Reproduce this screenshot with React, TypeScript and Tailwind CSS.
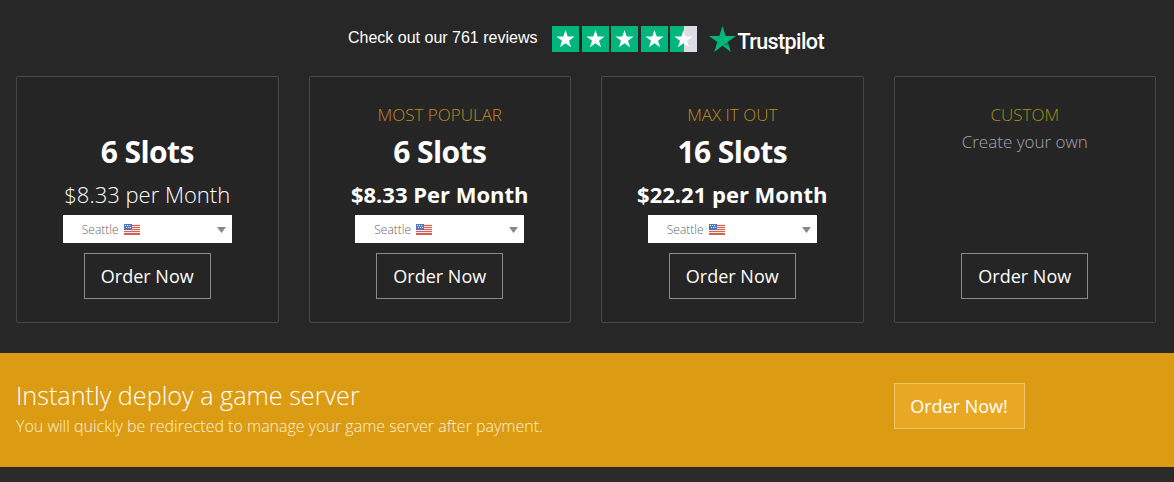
const PLANS = [
  { label: '', slots: '6 Slots', price: '$8.33 per Month', bold: false, color: '' },
  { label: 'MOST POPULAR', slots: '6 Slots', price: '$8.33 Per Month', bold: true, color: 'text-[#c08a24]' },
  { label: 'MAX IT OUT', slots: '16 Slots', price: '$22.21 per Month', bold: true, color: 'text-[#b88e22]' },
];

const STAR = '13.5,3.9 15.66,10.53 22.6,10.5 16.99,14.63 19.1,21.3 13.5,17.17 7.9,21.3 10.01,14.63 4.4,10.5 11.34,10.53';

function Flag() {
  return (
    <svg width="16" height="11" viewBox="0 0 16 11" className="inline-block">
      <rect width="16" height="11" fill="#f3e6e6" />
      <rect y="1" width="16" height="1" fill="#d9604f" />
      <rect y="3" width="16" height="1" fill="#d9604f" />
      <rect y="5" width="16" height="1" fill="#d9604f" />
      <rect y="7" width="16" height="1" fill="#d9604f" />
      <rect y="9" width="16" height="2" fill="#d9604f" />
      <rect width="8" height="6" fill="#4f74c0" />
      <rect x="1" y="1" width="1" height="1" fill="#fff" />
      <rect x="3" y="1" width="1" height="1" fill="#fff" />
      <rect x="5" y="1" width="1" height="1" fill="#fff" />
      <rect x="2" y="3" width="1" height="1" fill="#fff" />
      <rect x="4" y="3" width="1" height="1" fill="#fff" />
      <rect x="6" y="3" width="1" height="1" fill="#fff" />
    </svg>
  );
}

function LocationSelect() {
  return (
    <div className="w-[169px] h-[28px] bg-white flex items-center justify-between pl-[19px] pr-[6px] pt-[1px] text-[12px] font-light text-[#666]">
      <span className="flex items-center gap-[5px]">Seattle <Flag /></span>
      <svg width="9" height="6" viewBox="0 0 9 6"><polygon points="0,0 9,0 4.5,6" fill="#888" /></svg>
    </div>
  );
}

function OrderButton() {
  return (
    <button className="w-[127px] h-[46px] border border-[#8a8a8a] text-[18px] text-white">Order Now</button>
  );
}

function TrustStars() {
  return (
    <div className="flex gap-[2.5px] ml-[15px]">
      {[0, 1, 2, 3].map((i) => (
        <svg key={i} width="27" height="26" viewBox="0 0 27 26">
          <rect width="27" height="26" fill="#00b67a" />
          <polygon points={STAR} fill="#fff" />
        </svg>
      ))}
      <svg width="27" height="26" viewBox="0 0 27 26">
        <rect width="27" height="26" fill="#dcdce6" />
        <rect width="14" height="26" fill="#00b67a" />
        <polygon points={STAR} fill="#fff" />
      </svg>
    </div>
  );
}

function TrustLogo() {
  return (
    <div className="flex items-start ml-[12px]">
      <svg width="27" height="26" viewBox="0 0 27 26">
        <polygon points="13.5,0 16.7,9.9 27,9.9 18.7,16 21.8,26 13.5,19.8 5.2,26 8.3,16 0,9.9 10.3,9.9" fill="#00b67a" />
        <polygon points="18.7,16 19.6,19 13.5,19.8" fill="#00894f" />
      </svg>
      <span className="ml-[1px] mt-[3px] text-[21.5px] leading-[26px] font-medium tracking-[-0.6px] text-white font-['Roboto',sans-serif]">Trustpilot</span>
    </div>
  );
}

export default function App() {
  return (
    <div className="h-[482px] overflow-hidden bg-[#272727] font-['Open_Sans',sans-serif]">
      {/* Reviews */}
      <div className="h-[76px] pt-[26px] pr-[2px] flex justify-center items-start">
        <span className="text-[16px] leading-[24px] text-white font-['Liberation_Sans',sans-serif]">Check out our 761 reviews</span>
        <TrustStars />
        <TrustLogo />
      </div>

      {/* Plans */}
      <div className="grid grid-cols-4 gap-[30px] pl-4 pr-[18px]">
        {PLANS.map((p) => (
          <div key={p.price} className="h-[247px] bg-[#252525] border border-[#484848] rounded-[2px] flex flex-col items-center">
            <div className={`h-[24px] mt-[26px] text-[17px] leading-[24px] font-light ${p.color}`}>{p.label}</div>
            <h3 className="mt-[5px] h-[40px] text-[30px] leading-[40px] font-bold tracking-[-0.6px] text-white">{p.slots}</h3>
            <div className={`mt-[7px] h-[30px] leading-[30px] text-[22px] text-white ${p.bold ? 'font-bold' : 'font-light'}`}>{p.price}</div>
            <div className="mt-[6px]"><LocationSelect /></div>
            <div className="mt-[10px]"><OrderButton /></div>
          </div>
        ))}
        <div className="h-[247px] bg-[#252525] border border-[#484848] rounded-[2px] flex flex-col items-center">
          <div className="h-[24px] mt-[26px] text-[17px] leading-[24px] font-light text-[#a8901c]">CUSTOM</div>
          <div className="mt-[3px] text-[17px] leading-[24px] font-light text-[#a4a4b0]">Create your own</div>
          <div className="mt-auto mb-[23px]"><OrderButton /></div>
        </div>
      </div>

      {/* Banner */}
      <div className="mt-[30px] h-[114px] bg-[#db9b12] grid grid-cols-4 gap-[30px] pl-4 pr-[18px] pt-[27px] items-start">
        <div className="col-span-3">
          <div className="text-[25.2px] leading-[30px] font-light text-white">Instantly deploy a game server</div>
          <div className="text-[16px] leading-[24px] font-light text-[#fdf1d6] mt-[4px]">You will quickly be redirected to manage your game server after payment.</div>
        </div>
        <button className="mt-[3px] w-[131px] h-[46px] bg-[#e9a823] border border-[#f0c468] text-[18px] text-white">Order Now!</button>
      </div>
      <div className="h-[15px] bg-[#2a2a2a]" />
    </div>
  );
}
